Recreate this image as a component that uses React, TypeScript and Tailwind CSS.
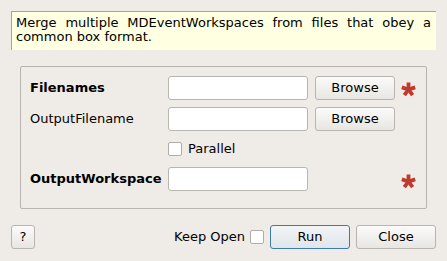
import React from "react";

function Star() {
  const arms = [0, 72, 144, 216, 288].map((a) => {
    const r = (a * Math.PI) / 180;
    return [Math.sin(r) * 7, -Math.cos(r) * 7];
  });
  return (
    <svg width="17" height="17" viewBox="-8.5 -8 17 17" className="block">
      {arms.map(([x, y], i) => (
        <line key={i} x1="0" y1="0.5" x2={x} y2={y + 0.5} stroke="#c0392b" strokeWidth="3.8" strokeLinecap="butt" />
      ))}
    </svg>
  );
}

function Input() {
  return <div className="w-[140px] h-[24px] bg-white border border-[#b9b5b0] rounded-[3px]" />;
}

function Btn({ children, w = "w-[80px]", primary = false }: { children: React.ReactNode; w?: string; primary?: boolean }) {
  return (
    <div
      className={
        "h-[24px] flex items-center justify-center rounded-[3px] border " +
        w +
        (primary
          ? " border-[#3e7bab] bg-gradient-to-b from-[#f3f5f7] to-[#dfe5ea]"
          : " border-[#b8b4b0] bg-gradient-to-b from-[#fbfbfa] to-[#e8e6e3]")
      }
    >
      {children}
    </div>
  );
}

function Check() {
  return <div className="w-[14px] h-[14px] bg-white border border-[#b0aca7] rounded-[2px]" />;
}

export default function App() {
  return (
    <div
      className="w-[447px] h-[261px] bg-[#efebe7] text-[13px] text-black flex flex-col overflow-hidden"
      style={{ fontFamily: '"DejaVu Sans", Verdana, sans-serif' }}
    >
      <div className="mx-[11px] mt-[11px] h-[39px] border-t border-l border-[#a5a19c] bg-[#ffffe1] pl-[4px] pr-[5px] pt-[4px] leading-[14px] text-justify">
        Merge multiple MDEventWorkspaces from files that obey a common box format.
      </div>

      <div className="mx-[20px] mt-[16px] h-[143px] border border-[#b7b3ae] rounded-[2px] pl-[9px] pt-[9px] flex flex-col gap-[7px]">
        <div className="flex items-center h-[24px]">
          <div className="w-[138px] font-bold">Filenames</div>
          <Input />
          <div className="ml-[7px]"><Btn>Browse</Btn></div>
          <div className="ml-[5px] mt-[2px]"><Star /></div>
        </div>
        <div className="flex items-center h-[24px]">
          <div className="w-[138px]">OutputFilename</div>
          <Input />
          <div className="ml-[7px]"><Btn>Browse</Btn></div>
        </div>
        <div className="flex items-center h-[22px] pl-[138px]">
          <Check />
          <span className="ml-[6px]">Parallel</span>
        </div>
        <div className="flex items-center h-[24px]">
          <div className="w-[138px] font-bold">OutputWorkspace</div>
          <Input />
          <div className="ml-[92px] mt-[4px]"><Star /></div>
        </div>
      </div>

      <div className="mx-[11px] mt-[16px] flex items-center h-[24px]">
        <Btn w="w-[24px]">?</Btn>
        <div className="flex-1" />
        <span>Keep Open</span>
        <div className="ml-[5px]"><Check /></div>
        <div className="ml-[6px]"><Btn primary>Run</Btn></div>
        <div className="ml-[6px]"><Btn>Close</Btn></div>
      </div>
    </div>
  );
}
